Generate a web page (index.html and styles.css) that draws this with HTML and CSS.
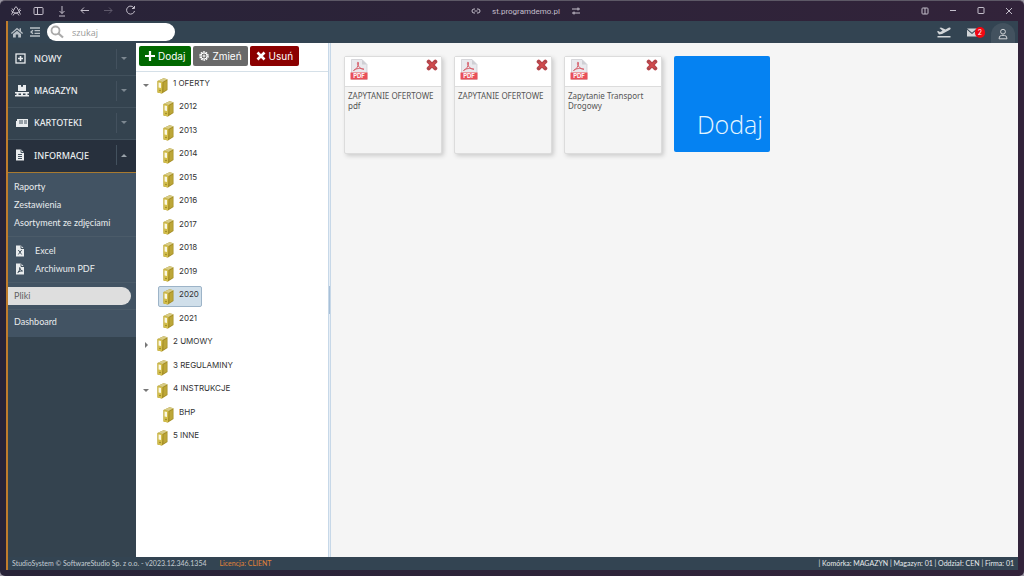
FILE: index.html
```html
<!DOCTYPE html>
<html lang="pl">
<head>
<meta charset="utf-8">
<title>StudioSystem – Pliki</title>
<link rel="stylesheet" href="styles.css">
</head>
<body>
<svg class="defs" aria-hidden="true">
  <symbol id="binder" viewBox="0 0 11 16">
    <path d="M0.5 3 6.500 0.300 10.500 1.300V12L5 15.500 0.500 14.500Z" fill="#a48d24"/>
    <path d="M0.500 3 6.500 0.300 10.500 1.300 5.500 4Z" fill="#d8cc86"/>
    <path d="M0.500 3 5.500 4 5 15.500 0.500 14.500Z" fill="#d3be4c"/>
    <path d="M1.600 4.500 4 5V10L1.600 9.500Z" fill="#faf7e4"/>
    <circle cx="3" cy="12.500" r="0.700" fill="#85711c"/>
    <path d="M6.500 4.500 9.800 2.800V11.500L6.500 13.500Z" fill="#bca638"/>
  </symbol>
  <symbol id="pdf" viewBox="0 0 18 21">
    <path d="M1.500.5H12L17 5.500V20.500H1.500Z" fill="#e9e9ed" stroke="#c9c9ce" stroke-width=".7"/>
    <path d="M12 .5V5.500H17Z" fill="#cfcfd4"/>
    <path d="M3.500 11.500C6 10.500 8.500 7.500 8.500 4 8.500 2.500 7 3 7.500 4.800 8.200 8 11 10.300 14 10.300M3.500 11.500C6 9.500 10 8.700 14 10.300" fill="none" stroke="#d8606c" stroke-width="1"/>
    <rect x=".5" y="13.500" width="17" height="7" fill="#e85058"/>
  </symbol>
  <symbol id="cross" viewBox="0 0 12 12">
    <path d="M2.700 2.700 9.300 9.300M9.300 2.700 2.700 9.300" stroke="#b8434a" stroke-width="4" stroke-linecap="round"/>
    <path d="M2.700 2.700 9.300 9.300M9.300 2.700 2.700 9.300" stroke="#d24a4c" stroke-width="1.600" stroke-linecap="round"/>
    <g fill="#8e5053"><circle cx="2.500" cy="2.500" r=".8"/><circle cx="9.500" cy="2.500" r=".8"/><circle cx="2.500" cy="9.500" r=".8"/><circle cx="9.500" cy="9.500" r=".8"/></g>
  </symbol>
</svg>

<div class="window">
  <header class="titlebar">
    <div class="tools">
      <button class="ico" aria-label="Arc"><svg width="12" height="12" viewBox="0 0 12 12"><path d="M1.500 9.500 5 2.500Q6 1 7 2.500L10.500 9.500M1 5.500Q6 11 11 5M3 10.500Q4 8 6 8T9 10.500M2 3.500 3.500 5.500M8.500 6 10 3.500"/></svg></button>
      <button class="ico" aria-label="Panel boczny"><svg width="12" height="12" viewBox="0 0 12 12"><rect x="1" y="2.500" width="9" height="7" rx="1"/><path d="M4.500 2.500V9.500"/></svg></button>
      <button class="ico" aria-label="Pobrane"><svg width="12" height="12" viewBox="0 0 12 12"><path d="M6 1V8.500M3.500 6 6 8.500 8.500 6M3 11H9"/></svg></button>
      <button class="ico" aria-label="Wstecz"><svg width="12" height="12" viewBox="0 0 12 12"><path d="M10 5.500H2M5 2.500 2 5.500 5 8.500"/></svg></button>
      <button class="ico dim" aria-label="Dalej"><svg width="12" height="12" viewBox="0 0 12 12"><path d="M2 5.500H10M7 2.500 10 5.500 7 8.500"/></svg></button>
      <button class="ico" aria-label="Odśwież"><svg width="12" height="12" viewBox="0 0 12 12"><path d="M9 3A4 4 0 1 0 9.500 6M9.500 1V3.500H7"/></svg></button>
    </div>
    <div class="address">
      <svg width="10" height="10" viewBox="0 0 10 10"><path d="M4 3H3A2 2 0 0 0 3 7H4M6 3H7A2 2 0 0 1 7 7H6M3.500 5H6.500"/></svg>
      <span>st.programdemo.pl</span>
      <svg width="10" height="10" viewBox="0 0 10 10"><path d="M1 3H9M1 7H9M7 1.500V4.500M3 5.500V8.500"/></svg>
    </div>
    <div class="winctl">
      <button class="ico" aria-label="Podziel"><svg width="10" height="10" viewBox="0 0 10 10"><rect x="2" y="2" width="6" height="6" rx=".8"/><path d="M5 2V8"/></svg></button>
      <button class="ico" aria-label="Minimalizuj"><svg width="10" height="10" viewBox="0 0 10 10"><path d="M2 4.500H8"/></svg></button>
      <button class="ico" aria-label="Maksymalizuj"><svg width="10" height="10" viewBox="0 0 10 10"><rect x="2" y="1.500" width="6" height="6" rx=".5"/></svg></button>
      <button class="ico" aria-label="Zamknij"><svg width="10" height="10" viewBox="0 0 10 10"><path d="M2 2 8 8M8 2 2 8"/></svg></button>
    </div>
  </header>

  <div class="app">
    <div class="topbar">
      <button class="ico" aria-label="Start"><svg width="12" height="11" viewBox="0 0 12 11" class="fill"><path d="M6 .8 0 6 .8 6.900 6 2.500 11.200 6.900 12 6 10 4.200V1.200H8.600V3ZM2 7 6 3.700 10 7V10.500H7.200V7.500H4.800V10.500H2Z"/></svg></button>
      <button class="ico" aria-label="Zwiń menu"><svg width="10" height="10" viewBox="0 0 10 10"><path d="M0 1H10M4.500 3.700H10M4.500 6.300H10M0 9H10M3 3.200 1 5 3 6.800" stroke-width="1.300"/></svg></button>
      <label class="search">
        <svg width="14" height="14" viewBox="0 0 14 14"><circle cx="5.500" cy="5.500" r="4" fill="none" stroke="#aaa" stroke-width="1.800"/><path d="M8.500 8.500 13 12.500" stroke="#aaa" stroke-width="2.200"/></svg>
        <input type="text" placeholder="szukaj" aria-label="szukaj">
      </label>
      <div class="right">
        <button class="ico plane" aria-label="Wyloty"><svg width="14" height="12" viewBox="0 0 14 12" class="fill"><path d="M.5 10H13.500V11.500H.5ZM2 8.500 0 5.500 1.200 5 3 6 5.500 4.800 2.500 2 4 1.500 8.500 3.400 11.500 1.800Q13.500 1.200 13.700 2.500 13.500 3.400 12 4.300L5 8Z"/></svg></button>
        <button class="ico mail" aria-label="Wiadomości"><svg width="10" height="9" viewBox="0 0 10 9" class="fill"><path d="M0 .5H10L5 4.800ZM0 1.800 5 6 10 1.800V8.500H0Z"/></svg><span class="badge">2</span></button>
        <button class="ico user" aria-label="Konto"><svg width="10" height="12" viewBox="0 0 10 12"><circle cx="5" cy="3.700" r="2.400"/><path d="M1 10.800Q1 7.400 3.600 7.400H6.400Q9 7.400 9 10.800Z"/></svg></button>
      </div>
    </div>

    <div class="body">
      <aside class="sidebar">
        <nav>
          <button class="group"><svg width="12" height="12" viewBox="0 0 12 12"><rect x="1" y="1" width="9" height="9" stroke-width="1.300"/><path d="M5.500 3V8M3 5.500H8" stroke-width="1.600"/></svg><span>NOWY</span><i class="caret"></i></button>
          <button class="group"><svg width="14" height="12" viewBox="0 0 14 12" class="fill"><path d="M3 0H6V2L7 1.500 8 2V0H11V6H3ZM0 7H14V8.500H12.500V10H14V11.500H0V10H1.500V8.500H0Z"/><path d="M3.500 8.500H6V10H3.500ZM8 8.500H10.500V10H8Z" class="cut"/></svg><span>MAGAZYN</span><i class="caret"></i></button>
          <button class="group"><svg width="14" height="12" viewBox="0 0 14 12" class="fill"><path d="M2 2H13V10H1V4H2Z"/><path d="M4 4H8M9 4H12M4 6H8M9 6H12" class="line"/></svg><span>KARTOTEKI</span><i class="caret"></i></button>
          <button class="group active"><svg width="12" height="12" viewBox="0 0 12 12" class="fill"><path d="M1 .5H6L9 3.500V11.500H1Z"/><path d="M3 5.500H7M3 7.500H7M3 9.500H7M6 .5V3.500H9" class="line"/></svg><span>INFORMACJE</span><i class="caret up"></i></button>
        </nav>
        <div class="sub">
          <div class="block"><a href="#">Raporty</a><a href="#">Zestawienia</a><a href="#">Asortyment ze zdjęciami</a></div>
          <div class="block">
            <a href="#" class="with-ico"><svg width="12" height="12" viewBox="0 0 12 12" class="fill"><path d="M2 .5H7L10 3.500V11.500H2Z"/><path d="M4.300 5 7.700 9.500M7.700 5 4.300 9.500M7 .5V3.500H10" class="line"/></svg>Excel</a>
            <a href="#" class="with-ico"><svg width="12" height="12" viewBox="0 0 12 12" class="fill"><path d="M2 .5H7L10 3.500V11.500H2Z"/><path d="M3.800 9.500Q6.500 7 5.700 4.500 6 7.500 8.500 8 6 7.500 3.800 9.500M7 .5V3.500H10" class="line"/></svg>Archiwum PDF</a>
          </div>
          <div class="block tight"><a href="#" class="pill">Pliki</a></div>
          <div class="block last"><a href="#">Dashboard</a></div>
        </div>
      </aside>

      <section class="pane">
        <div class="actions">
          <button class="btn add"><svg width="10" height="10" viewBox="0 0 10 10"><path d="M5 0V10M0 5H10" stroke-width="2.200"/></svg>Dodaj</button>
          <button class="btn edit"><svg width="10" height="10" viewBox="0 0 10 10"><circle cx="5" cy="5" r="4" stroke-width="1.500" stroke-dasharray="1.700 .8"/><circle cx="5" cy="5" r="3"/><circle cx="5" cy="5" r="1"/></svg>Zmień</button>
          <button class="btn del"><svg width="10" height="10" viewBox="0 0 10 10"><path d="M1.500 1.500 8.500 8.500M8.500 1.500 1.500 8.500" stroke-width="2.600"/></svg>Usuń</button>
        </div>
        <ul class="tree">
          <li><i class="tw open"></i><a href="#"><svg><use href="#binder"/></svg>1 OFERTY</a></li>
          <li class="child"><a href="#"><svg><use href="#binder"/></svg>2012</a></li>
          <li class="child"><a href="#"><svg><use href="#binder"/></svg>2013</a></li>
          <li class="child"><a href="#"><svg><use href="#binder"/></svg>2014</a></li>
          <li class="child"><a href="#"><svg><use href="#binder"/></svg>2015</a></li>
          <li class="child"><a href="#"><svg><use href="#binder"/></svg>2016</a></li>
          <li class="child"><a href="#"><svg><use href="#binder"/></svg>2017</a></li>
          <li class="child"><a href="#"><svg><use href="#binder"/></svg>2018</a></li>
          <li class="child"><a href="#"><svg><use href="#binder"/></svg>2019</a></li>
          <li class="child"><a href="#" class="selected"><svg><use href="#binder"/></svg>2020</a></li>
          <li class="child"><a href="#"><svg><use href="#binder"/></svg>2021</a></li>
          <li><i class="tw closed"></i><a href="#"><svg><use href="#binder"/></svg>2 UMOWY</a></li>
          <li><i class="tw"></i><a href="#"><svg><use href="#binder"/></svg>3 REGULAMINY</a></li>
          <li><i class="tw open"></i><a href="#"><svg><use href="#binder"/></svg>4 INSTRUKCJE</a></li>
          <li class="child"><a href="#"><svg><use href="#binder"/></svg>BHP</a></li>
          <li><i class="tw"></i><a href="#"><svg><use href="#binder"/></svg>5 INNE</a></li>
        </ul>
      </section>
      <div class="splitter"><span></span></div>

      <main class="files">
        <article class="card">
          <div class="head"><div class="doc"><svg><use href="#pdf"/></svg><span>PDF</span></div><button class="ico" aria-label="Usuń plik"><svg width="12" height="12"><use href="#cross"/></svg></button></div>
          <p>ZAPYTANIE OFERTOWE pdf</p>
        </article>
        <article class="card">
          <div class="head"><div class="doc"><svg><use href="#pdf"/></svg><span>PDF</span></div><button class="ico" aria-label="Usuń plik"><svg width="12" height="12"><use href="#cross"/></svg></button></div>
          <p>ZAPYTANIE OFERTOWE</p>
        </article>
        <article class="card">
          <div class="head"><div class="doc"><svg><use href="#pdf"/></svg><span>PDF</span></div><button class="ico" aria-label="Usuń plik"><svg width="12" height="12"><use href="#cross"/></svg></button></div>
          <p>Zapytanie Transport Drogowy</p>
        </article>
        <button class="tile">Dodaj</button>
      </main>
    </div>

    <footer class="status">
      <span>StudioSystem © SoftwareStudio Sp. z o.o. - v2023.12.346.1354</span>
      <span class="lic">Licencja: CLIENT</span>
      <span class="info">| Komórka: MAGAZYN | Magazyn: 01 | Oddział: CEN | Firma: 01</span>
    </footer>
  </div>
</div>
</body>
</html>
```

FILE: styles.css
```css
* { box-sizing: border-box; }

body {
  margin: 0;
  background: #9a96a2;
  font-family: Inter, "Open Sans", sans-serif;
  font-size: 8px;
  color: #333;
}

button {
  margin: 0;
  padding: 0;
  border: 0;
  background: none;
  font: inherit;
  color: inherit;
}

a { color: inherit; text-decoration: none; }

svg { display: block; flex: none; fill: none; stroke: currentColor; stroke-width: 1; }
svg.fill { fill: currentColor; stroke: none; }
symbol { stroke: none; }
.defs { position: absolute; width: 0; height: 0; }
.ico { display: flex; align-items: center; justify-content: center; }

.window {
  display: flex;
  flex-direction: column;
  min-height: 100vh;
  padding: 0 6px 6px;
  border-top: 1px solid #5d5866;
  border-radius: 5px;
  background: linear-gradient(90deg, #282338, #32233a);
}

/* browser chrome */
.titlebar {
  display: grid;
  grid-template-columns: 1fr auto 1fr;
  align-items: center;
  height: 20px;
  color: #c4bfcb;
}
.tools { display: flex; gap: 11px; padding-left: 4px; }
.dim { opacity: .35; }
.address { display: flex; align-items: center; gap: 11px; padding-left: 28px; font-family: Roboto, sans-serif; font-size: 8px; }
.winctl { display: flex; justify-content: flex-end; gap: 18px; padding-right: 4px; }

.app {
  display: flex;
  flex: 1;
  flex-direction: column;
  border-left: 2px solid #c07c2c;
  background: #334452;
}

.topbar {
  display: flex;
  align-items: center;
  gap: 7px;
  height: 22px;
  padding-left: 3px;
  color: #b9c0c6;
}
.search {
  display: flex;
  align-items: center;
  width: 128px;
  height: 18px;
  padding-left: 3px;
  border-radius: 9px;
  background: #fff;
}
.search input {
  width: 90px;
  padding: 0 8px;
  border: 0;
  outline: 0;
  background: none;
  font: 9px "Open Sans", sans-serif;
}
.search input::placeholder { color: #999; opacity: 1; }
.right { display: flex; align-items: center; gap: 14px; margin-left: auto; padding-right: 3px; color: #d2d5d8; }
.plane { padding-right: 2px; }
.mail { position: relative; }
.badge {
  position: absolute;
  left: 8px;
  top: -1px;
  width: 10px;
  height: 11px;
  border-radius: 6px;
  background: #f00812;
  color: #fff;
  font-size: 7px;
  line-height: 11px;
}
.user { width: 24px; height: 20px; margin-top: 2px; padding-top: 2px; border-radius: 12px 12px 0 0; background: #43525f; }

.body { display: flex; flex: 1; }

/* sidebar */
.sidebar { width: 128px; padding-top: 1px; background: #34434f; color: #e9ecee; }
.group {
  display: flex;
  align-items: center;
  width: 100%;
  height: 32px;
  padding: 0 9px 2px 7px;
  border-bottom: 1px solid #42515d;
  font-family: "Noto Sans", sans-serif;
  font-size: 9px;
  font-weight: 500;
  text-align: left;
}
.group svg { width: 14px; }
.group svg[width="12"] { width: 12px; margin-right: 2px; }
.group span { flex: 1; padding-left: 5px; }
.group.active { height: 33px; border-bottom-color: #a87a30; background: #27303d; }
.cut { fill: #34434f; }
.line { fill: none; stroke: #43525f; stroke-width: 1; }
.caret { display: flex; align-items: center; height: 20px; padding-left: 4px; border-left: 1px solid #43515e; }
.caret::before { content: ""; border: 3px solid transparent; border-top-color: #7d8891; border-bottom-width: 0; }
.caret.up::before { border: 3px solid transparent; border-bottom-color: #9aa2aa; border-top-width: 0; }

.sub { background: #425363; font-family: Lato, sans-serif; font-size: 9px; line-height: 18px; }
.block { padding: 5px 0 4px; border-bottom: 1px solid #4b5b69; }
.block a { display: block; padding-left: 6px; }
.block .with-ico { display: flex; align-items: center; gap: 9px; }
.tight { padding: 4px 0; }
.block .pill { margin-right: 5px; border-radius: 0 9px 9px 0; background: #dedede; color: #626262; }
.last { padding: 3px 0 6px; border-bottom: 0; }

/* folder tree */
.pane { width: 192px; background: #fff; }
.actions { display: flex; gap: 2px; padding: 3px 3px 5px; border-bottom: 1px solid #d5e0e8; }
.btn {
  display: flex;
  align-items: center;
  gap: 3px;
  height: 20px;
  padding: 0 6px;
  border-radius: 2px;
  color: #fff;
  font-size: 10px;
}
.add { background: #006800; }
.edit { background: #696969; }
.del { background: #8b0000; }
.tree {
  display: grid;
  grid-auto-rows: 23px 24px;
  margin: 0;
  padding: 3px 0 0 6px;
  list-style: none;
}
.tree li { display: flex; align-items: flex-start; }
.tree a {
  display: flex;
  gap: 5px;
  height: 21px;
  padding: 0 2px 0 4px;
  border: 1px solid transparent;
  border-radius: 2px;
  line-height: 14px;
}
.tree svg { width: 11px; height: 16px; margin-top: 2px; stroke: none; }
.tree .child { padding-left: 16px; }
.tree .selected { border-color: #9db4c8; background: #d0dfea; }
.tw { width: 10px; height: 23px; padding: 9px 1px 0; }
.tw::before { display: block; width: 0; content: ""; border: 3px solid transparent; }
.open::before { border-top-color: #777; border-bottom-width: 0; }
.closed { padding-left: 3px; }
.closed::before { border-left-color: #777; border-right-width: 0; }

.splitter { display: flex; align-items: center; width: 3px; border: 1px solid #c7d8e8; border-width: 0 1px; background: #e6eef6; }
.splitter span { width: 1px; height: 28px; background: #a8c0d8; }

/* files */
.files {
  display: flex;
  flex: 1;
  flex-wrap: wrap;
  align-content: flex-start;
  gap: 12px;
  padding: 13px;
  background: #f5f5f5;
}
.card {
  width: 98px;
  min-height: 98px;
  border: 1px solid #dcdcdc;
  border-radius: 2px;
  background: #f4f4f4;
  box-shadow: 2px 2px 4px #ccc;
  color: #555;
  font-family: "Noto Sans", sans-serif;
}
.head {
  display: flex;
  align-items: flex-start;
  justify-content: space-between;
  height: 30px;
  padding: 2px 3px 0 5px;
  border-bottom: 1px solid #dcdcdc;
  background: #fff;
}
.doc { position: relative; }
.doc svg { width: 18px; height: 21px; stroke: none; }
.doc span {
  position: absolute;
  inset: auto 0 0;
  color: #fff;
  font: 700 6px/8px Inter, sans-serif;
  text-align: center;
}
.card p { margin: 0; padding: 4px 3px; line-height: 10px; }
.tile {
  display: flex;
  align-items: flex-end;
  justify-content: flex-end;
  width: 96px;
  height: 96px;
  padding: 0 7px 9px;
  border-radius: 2px;
  background: #0582f2;
  color: #e4f5ff;
  font: 300 25px/38px "Open Sans", sans-serif;
}

.status {
  display: flex;
  gap: 13px;
  height: 13px;
  padding: 0 4px;
  color: #c4ccd2;
  font-family: Lato, sans-serif;
  font-size: 7px;
  line-height: 13px;
}
.lic { color: #e08338; }
.info { margin-left: auto; color: #e8ebed; }
```
